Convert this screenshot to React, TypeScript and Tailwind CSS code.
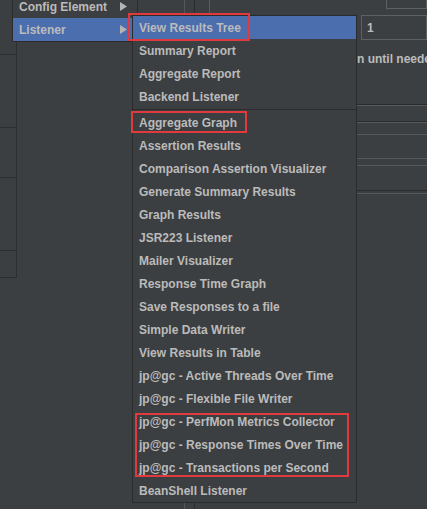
const font = "font-['Liberation_Sans',Arial,sans-serif]";

const topItems = ["View Results Tree", "Summary Report", "Aggregate Report", "Backend Listener"];

const restItems = [
  "Aggregate Graph",
  "Assertion Results",
  "Comparison Assertion Visualizer",
  "Generate Summary Results",
  "Graph Results",
  "JSR223 Listener",
  "Mailer Visualizer",
  "Response Time Graph",
  "Save Responses to a file",
  "Simple Data Writer",
  "View Results in Table",
  "jp@gc - Active Threads Over Time",
  "jp@gc - Flexible File Writer",
  "jp@gc - PerfMon Metrics Collector",
  "jp@gc - Response Times Over Time",
  "jp@gc - Transactions per Second",
  "BeanShell Listener",
];

function Arrow() {
  return (
    <svg width="7" height="9" viewBox="0 0 7 9" className="shrink-0">
      <path d="M0 0 L7 4.5 L0 9 Z" fill="#b4b4b4" />
    </svg>
  );
}

function MenuItem({ label, active }: { label: string; active?: boolean }) {
  return (
    <div
      className={`flex h-[23px] items-center pl-[6px] text-[12px] font-bold text-[#bbbbbb] whitespace-nowrap ${
        active ? "bg-[#4b6eaf]" : ""
      }`}
    >
      {label}
    </div>
  );
}

export default function App() {
  return (
    <div className={`relative h-[509px] w-[427px] overflow-hidden bg-[#3c3f41] ${font}`}>
      {/* background window */}
      <div className="flex h-full">
        <div className="flex h-[278px] w-[17px] shrink-0 flex-col border-r border-b border-[#2e2e2e]">
          <div className="h-[55px] border-b border-[#2e2e2e]" />
          <div className="h-[73px] border-b border-[#2e2e2e]" />
          <div className="h-[50px] border-b border-[#2e2e2e]" />
          <div className="h-[73px] border-b border-[#2e2e2e]" />
        </div>
        <div className="w-[167px] shrink-0" />
        <div className="h-full w-[10px] shrink-0 border-l border-[#555758]" />
        <div className="flex h-full w-[163px] shrink-0 border-l border-[#2b2b2b]">
          <div className="w-[14px]" />
          <div className="h-[13px] w-px bg-[#5a5c5e]" />
        </div>
        <div className="flex min-w-0 flex-1 flex-col">
          <div className="flex h-[15px]">
            <div className="w-[29px] shrink-0" />
            <div className="-mt-[8px] h-[17px] flex-1 border border-[#5e6162]" />
          </div>
          <div className="flex h-[25px]">
            <div className="w-[4px] shrink-0" />
            <div className="flex flex-1 items-center border border-[#5e6162] pl-[5px] text-[12px] font-bold text-[#bbbbbb]">
              1
            </div>
          </div>
          <div className="mt-[10px] whitespace-nowrap text-[12px] font-bold text-[#bbbbbb]">n until needed</div>
          <div className="h-[36px]" />
          <div className="h-px bg-[#2b2b2b]" />
          <div className="h-px bg-[#575a5c]" />
          <div className="h-[15px]" />
          <div className="h-px bg-[#2b2b2b]" />
          <div className="h-px bg-[#575a5c]" />
          <div className="h-[11px]" />
          <div className="h-px bg-[#575a5c]" />
          <div className="h-[23px]" />
          <div className="h-px bg-[#575a5c]" />
          <div className="h-[6px]" />
          <div className="h-px bg-[#575a5c]" />
          <div className="h-[24px]" />
          <div className="h-px bg-[#2b2b2b]" />
          <div className="h-[2px]" />
          <div className="h-px bg-[#575a5c]" />
        </div>
      </div>

      {/* parent popup menu */}
      <div className="absolute left-[12px] top-[-6px] w-[126px] border border-[#2b2b2b] bg-[#3c3f41]">
        <div className="flex h-[23px] items-center justify-between pl-[6px] pr-[10px] text-[12px] font-bold text-[#bbbbbb]">
          <span>Config Element</span>
          <Arrow />
        </div>
        <div className="flex h-[23px] items-center justify-between bg-[#4b6eaf] pl-[6px] pr-[10px] text-[12px] font-bold text-[#bbbbbb]">
          <span>Listener</span>
          <Arrow />
        </div>
      </div>

      {/* submenu */}
      <div className="absolute left-[132px] top-[15px] w-[225px] border border-[#2b2b2b] bg-[#3c3f41]">
        {topItems.map((label, i) => (
          <MenuItem key={label} label={label} active={i === 0} />
        ))}
        <div className="flex h-[3px] flex-col justify-center">
          <div className="h-px bg-[#2b2b2b]" />
        </div>
        {restItems.map((label) => (
          <MenuItem key={label} label={label} />
        ))}
      </div>

      {/* red annotation boxes */}
      <div className="absolute left-[128px] top-[13px] h-[28px] w-[122px] border-2 border-[#e0393e]" />
      <div className="absolute left-[131px] top-[111px] h-[22px] w-[116px] border-2 border-[#e0393e]" />
      <div className="absolute left-[135px] top-[413px] h-[64px] w-[214px] border-2 border-[#e0393e]" />
    </div>
  );
}
